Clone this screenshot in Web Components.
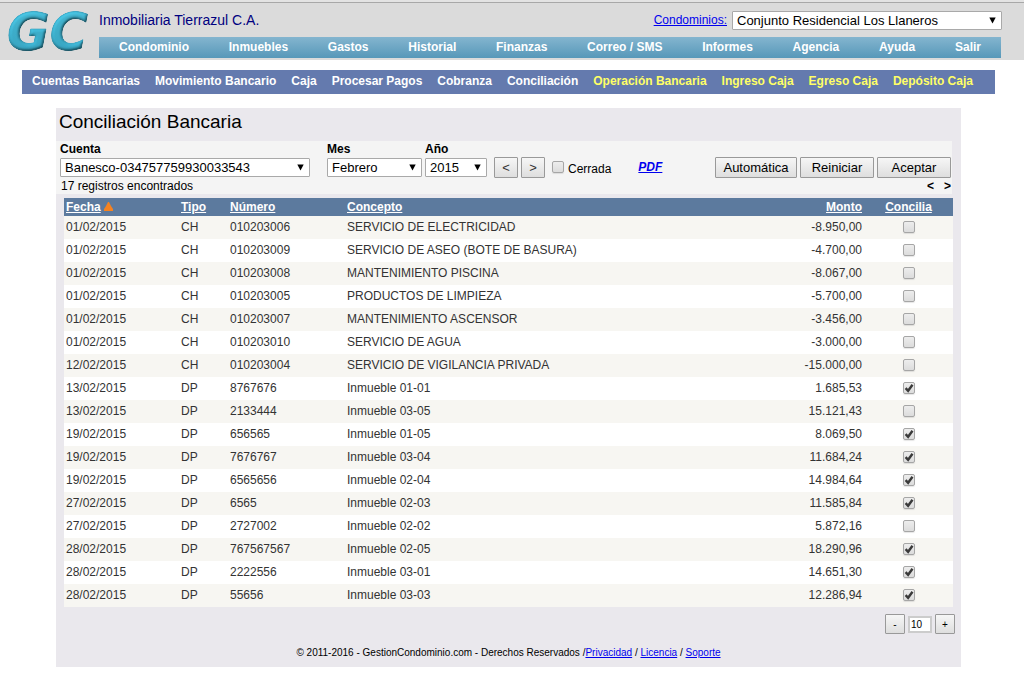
<!DOCTYPE html>
<html lang="es">
<head>
<meta charset="utf-8">
<title>Conciliación Bancaria</title>
<style>
  body {
    margin: 0;
    background: #fff;
    color: #000;
    font-family: "Liberation Sans", Arial, sans-serif;
    font-size: 12px;
    line-height: 16px;
  }
</style>
</head>
<body>

<site-header company="Inmobiliaria Tierrazul C.A.">
  <menu-bar slot="menu" label="Principal">
    <a href="#">Condominio</a>
    <a href="#">Inmuebles</a>
    <a href="#">Gastos</a>
    <a href="#">Historial</a>
    <a href="#">Finanzas</a>
    <a href="#">Correo / SMS</a>
    <a href="#">Informes</a>
    <a href="#">Agencia</a>
    <a href="#">Ayuda</a>
    <a href="#">Salir</a>
  </menu-bar>
</site-header>

<menu-bar kind="sub" label="Finanzas">
  <a href="#">Cuentas Bancarias</a>
  <a href="#">Movimiento Bancario</a>
  <a href="#">Caja</a>
  <a href="#">Procesar Pagos</a>
  <a href="#">Cobranza</a>
  <a href="#">Conciliación</a>
  <a href="#" class="quick">Operación Bancaria</a>
  <a href="#" class="quick">Ingreso Caja</a>
  <a href="#" class="quick">Egreso Caja</a>
  <a href="#" class="quick">Depósito Caja</a>
</menu-bar>

<page-panel>
  <span slot="title">Conciliación Bancaria</span>
  <filter-bar slot="filters"></filter-bar>
  <conciliation-table></conciliation-table>
  <page-size slot="pager" value="10"></page-size>
  <span slot="footer">© 2011-2016 - GestionCondominio.com - Derechos Reservados /<a href="#">Privacidad</a> / <a href="#">Licencia</a> / <a href="#">Soporte</a></span>
</page-panel>

<script>
  // Drop-down with an optional label above it
  class SelectField extends HTMLElement {
    constructor() {
      super();
      this.attachShadow({mode: 'open'});
    }

    connectedCallback() {
      const label = this.getAttribute('label');
      const value = this.getAttribute('value');

      this.shadowRoot.innerHTML = `
        <style>
          :host { display: block; }
          label {
            display: block;
            font-weight: bold;
            line-height: 16px;
            margin-bottom: 1px;
          }
          .box { display: grid; align-items: center; }
          .box > * { grid-area: 1 / 1; }
          select {
            appearance: none;
            box-sizing: border-box;
            width: 100%;
            height: 19px;
            margin: 0;
            padding: 0 20px 0 4px;
            border: 1px solid #a9a9a9;
            border-radius: 1px;
            background: #fff;
            color: #000;
            font: 13px "Liberation Sans", Arial, sans-serif;
          }
          svg {
            justify-self: end;
            margin-right: 6px;
            pointer-events: none;
          }
        </style>
        ${label ? `<label for="select">${label}</label>` : ''}
        <div class="box">
          <select id="select" ${label ? '' : `aria-label="${this.getAttribute('name')}"`}>
            <option>${value}</option>
          </select>
          <svg width="7" height="7" viewBox="0 0 7 7"><path d="M0.3 0.5h6.4L3.5 6.5z"/></svg>
        </div>
      `;
    }
  }

  // Grey gradient checkbox, text passed in the slot
  class CheckField extends HTMLElement {
    constructor() {
      super();
      this.attachShadow({mode: 'open'});
    }

    connectedCallback() {
      const checked = this.hasAttribute('checked') ? 'checked' : '';
      const name = this.getAttribute('name');

      this.shadowRoot.innerHTML = `
        <style>
          :host { display: inline-flex; }
          label { display: flex; align-items: flex-start; gap: 4px; }
          .box { display: grid; }
          .box > * { grid-area: 1 / 1; }
          input {
            appearance: none;
            box-sizing: border-box;
            width: 12px;
            height: 12px;
            margin: 0;
            border: 1px solid #a6a6a6;
            border-radius: 2px;
            background: linear-gradient(#ededed, #dcdcdc);
            box-shadow: 0 1px 1px #0000001a;
          }
          svg { display: none; pointer-events: none; }
          input:checked + svg { display: block; }
        </style>
        <label>
          <span class="box">
            <input type="checkbox" ${checked} ${name ? `aria-label="${name}"` : ''}>
            <svg width="12" height="12" viewBox="0 0 12 12">
              <path d="M2.6 6.2l2.5 2.6 4.4-6" fill="none" stroke="#3a3a3a" stroke-width="2.4"/>
            </svg>
          </span>
          <slot></slot>
        </label>
      `;
    }
  }

  class PushButton extends HTMLElement {
    constructor() {
      super();
      this.attachShadow({mode: 'open'});
      this.shadowRoot.innerHTML = `
        <style>
          :host { display: inline-flex; --size: 13px; }
          :host([small]) { --size: 10px; }
          button {
            box-sizing: border-box;
            min-width: var(--width, 24px);
            height: var(--height, 21px);
            margin: 0;
            padding: 0 2px;
            border: 1px solid #999;
            border-radius: 1px;
            background: linear-gradient(#f6f6f6, #dedede);
            color: var(--ink, #000);
            font: var(--size) "Liberation Sans", Arial, sans-serif;
          }
        </style>
        <button type="button"><slot></slot></button>
      `;
    }
  }

  class MenuBar extends HTMLElement {
    constructor() {
      super();
      this.attachShadow({mode: 'open'});
      this.shadowRoot.innerHTML = `
        <style>
          :host { display: block; }
          nav {
            display: flex;
            box-sizing: border-box;
            height: 21px;
            padding: 0 20px;
            gap: 8px;
            justify-content: space-between;
            line-height: 20px;
            background: linear-gradient(#84b5cf, #5798b9);
          }
          :host([kind="sub"]) nav {
            height: 24px;
            margin: 10px 29px 0 22px;
            padding: 0 22px 0 10px;
            line-height: 22px;
            background: #647aae;
          }
          ::slotted(a) {
            color: #fff;
            font-weight: bold;
            text-decoration: none;
            white-space: nowrap;
          }
          ::slotted(a.quick) { color: #ff6; }
        </style>
        <nav><slot></slot></nav>
      `;
    }

    connectedCallback() {
      this.shadowRoot.querySelector('nav').setAttribute('aria-label', this.getAttribute('label'));
    }
  }

  class SiteHeader extends HTMLElement {
    constructor() {
      super();
      this.attachShadow({mode: 'open'});
    }

    connectedCallback() {
      this.shadowRoot.innerHTML = `
        <style>
          :host { display: block; background: #e3e3e3; padding-top: 2px; }
          header {
            display: flex;
            border-top: 1px solid #a8a8a8;
            padding: 0 23px 2px 8px;
            background: #dbdbdb;
          }
          .logo { flex: none; width: 91px; height: 55px; overflow: visible; }
          .main { flex: 1; min-width: 0; }
          .top {
            display: flex;
            align-items: center;
            height: 34px;
            gap: 5px;
          }
          .company { flex: 1; color: #000080; font-size: 14px; }
          a { color: #0000ee; }
          select-field { width: 270px; margin-right: -1px; }
        </style>
        <header>
          <svg class="logo" viewBox="0 0 91 55" role="img" aria-label="GC">
            <defs>
              <linearGradient id="fill" x1="0" y1="0" x2="0" y2="1">
                <stop offset="0" stop-color="#48bfdb"/>
                <stop offset="1" stop-color="#36a5c3"/>
              </linearGradient>
              <filter id="bevel" x="-10%" y="-10%" width="120%" height="120%">
                <feGaussianBlur in="SourceAlpha" stdDeviation="1.5" result="blur"/>
                <feDiffuseLighting in="blur" surfaceScale="3" lighting-color="#fff" result="light">
                  <feDistantLight azimuth="235" elevation="50"/>
                </feDiffuseLighting>
                <feComposite in="SourceGraphic" in2="light" operator="arithmetic" k1="0.9" k2="0.25" result="lit"/>
                <feComposite in="lit" in2="SourceAlpha" operator="in"/>
              </filter>
            </defs>
            <text x="-1" y="47" font-family="DejaVu Sans, sans-serif" font-size="52"
              font-weight="bold" font-style="italic" fill="url(#fill)"
              stroke="#3aa9c7" stroke-width="1" stroke-linejoin="round" filter="url(#bevel)">GC</text>
          </svg>
          <div class="main">
            <div class="top">
              <span class="company">${this.getAttribute('company')}</span>
              <a href="#">Condominios:</a>
              <select-field name="Condominios" value="Conjunto Residencial Los Llaneros"></select-field>
            </div>
            <slot name="menu"></slot>
          </div>
        </header>
      `;
    }
  }

  class PagePanel extends HTMLElement {
    constructor() {
      super();
      this.attachShadow({mode: 'open'});
      this.shadowRoot.innerHTML = `
        <style>
          :host { display: block; margin: 14px 63px 0 56px; background: #eae8ed; }
          h1 {
            margin: 0;
            padding: 1px 3px 6px;
            font-size: 19px;
            font-weight: normal;
            line-height: 26px;
          }
          main { padding: 4px 8px 7px; }
          footer {
            padding: 10px 0 6px;
            text-align: center;
            font-size: 10px;
            line-height: 17px;
          }
        </style>
        <h1><slot name="title"></slot></h1>
        <slot name="filters"></slot>
        <main><slot></slot></main>
        <slot name="pager"></slot>
        <footer><slot name="footer"></slot></footer>
      `;
    }
  }

  class FilterBar extends HTMLElement {
    constructor() {
      super();
      this.attachShadow({mode: 'open'});
      this.shadowRoot.innerHTML = `
        <style>
          :host {
            display: block;
            margin-right: 9px;
            padding: 0 1px 0 4px;
            background: #f4f4f4;
          }
          .fields, .steps, .actions, .found { display: flex; }
          .fields { align-items: flex-end; height: 37px; }
          .steps, .actions { gap: 3px; }
          .steps { margin-left: 7px; --ink: #333; }
          .account { width: 250px; margin-right: 17px; }
          .month { width: 95px; margin-right: 3px; }
          .year { width: 62px; }
          select-field { margin-bottom: 1px; }
          check-field { margin: 0 0 1px 7px; }
          .pdf {
            margin: 0 auto 3px 27px;
            color: #0000ee;
            font-size: 12px;
            font-weight: bold;
            font-style: italic;
          }
          .found { justify-content: space-between; padding-left: 1px; }
          .pages { display: flex; gap: 10px; font-weight: bold; }
          .pages a { color: #000; text-decoration: none; }
        </style>
        <div class="fields">
          <select-field class="account" label="Cuenta" value="Banesco-034757759930033543"></select-field>
          <select-field class="month" label="Mes" value="Febrero"></select-field>
          <select-field class="year" label="Año" value="2015"></select-field>
          <div class="steps">
            <push-button>&lt;</push-button>
            <push-button>&gt;</push-button>
          </div>
          <check-field>Cerrada</check-field>
          <a class="pdf" href="#">PDF</a>
          <div class="actions">
            <push-button style="--width: 82px">Automática</push-button>
            <push-button style="--width: 74px">Reiniciar</push-button>
            <push-button style="--width: 74px">Aceptar</push-button>
          </div>
        </div>
        <div class="found">
          <span>17 registros encontrados</span>
          <span class="pages"><a href="#">&lt;</a><a href="#">&gt;</a></span>
        </div>
      `;
    }
  }

  // fecha, tipo, número, concepto, monto, conciliado
  const movements = [
    ['01/02/2015', 'CH', '010203006', 'SERVICIO DE ELECTRICIDAD', '-8.950,00', false],
    ['01/02/2015', 'CH', '010203009', 'SERVICIO DE ASEO (BOTE DE BASURA)', '-4.700,00', false],
    ['01/02/2015', 'CH', '010203008', 'MANTENIMIENTO PISCINA', '-8.067,00', false],
    ['01/02/2015', 'CH', '010203005', 'PRODUCTOS DE LIMPIEZA', '-5.700,00', false],
    ['01/02/2015', 'CH', '010203007', 'MANTENIMIENTO ASCENSOR', '-3.456,00', false],
    ['01/02/2015', 'CH', '010203010', 'SERVICIO DE AGUA', '-3.000,00', false],
    ['12/02/2015', 'CH', '010203004', 'SERVICIO DE VIGILANCIA PRIVADA', '-15.000,00', false],
    ['13/02/2015', 'DP', '8767676', 'Inmueble 01-01', '1.685,53', true],
    ['13/02/2015', 'DP', '2133444', 'Inmueble 03-05', '15.121,43', false],
    ['19/02/2015', 'DP', '656565', 'Inmueble 01-05', '8.069,50', true],
    ['19/02/2015', 'DP', '7676767', 'Inmueble 03-04', '11.684,24', true],
    ['19/02/2015', 'DP', '6565656', 'Inmueble 02-04', '14.984,64', true],
    ['27/02/2015', 'DP', '6565', 'Inmueble 02-03', '11.585,84', true],
    ['27/02/2015', 'DP', '2727002', 'Inmueble 02-02', '5.872,16', false],
    ['28/02/2015', 'DP', '767567567', 'Inmueble 02-05', '18.290,96', true],
    ['28/02/2015', 'DP', '2222556', 'Inmueble 03-01', '14.651,30', true],
    ['28/02/2015', 'DP', '55656', 'Inmueble 03-03', '12.286,94', true]
  ];

  class ConciliationTable extends HTMLElement {
    constructor() {
      super();
      this.attachShadow({mode: 'open'});
    }

    connectedCallback() {
      const rows = movements.map(([date, type, number, concept, amount, done]) => `
        <tr>
          <td>${date}</td>
          <td>${type}</td>
          <td>${number}</td>
          <td>${concept}</td>
          <td class="amount">${amount}</td>
          <td class="check"><check-field name="Concilia ${number}" ${done ? 'checked' : ''}></check-field></td>
        </tr>
      `).join('');

      this.shadowRoot.innerHTML = `
        <style>
          :host { display: block; }
          table {
            width: 100%;
            table-layout: fixed;
            border-collapse: collapse;
          }
          th, td { padding: 0 2px; text-align: left; }
          th { height: 18px; background: #5c7a9e; line-height: 18px; }
          th a { color: #fff; }
          td { height: 21px; padding-bottom: 2px; color: #333; }
          tbody tr { background: #fff; }
          tbody tr:nth-child(odd) { background: #f7f6f2; }
          .date { width: 111px; }
          .type { width: 45px; }
          .number { width: 113px; }
          th.amount { width: 120px; }
          th.check { width: 85px; }
          .amount { text-align: right; }
          .check { text-align: center; }
          td check-field { vertical-align: middle; }
        </style>
        <table>
          <thead>
            <tr>
              <th class="date"><a href="#">Fecha</a>
                <svg width="9" height="9" viewBox="0 0 9 9"><path d="M4 0h1l2 4 2 3v2H0V7l2-3z" fill="#f58220"/></svg></th>
              <th class="type"><a href="#">Tipo</a></th>
              <th class="number"><a href="#">Número</a></th>
              <th><a href="#">Concepto</a></th>
              <th class="amount"><a href="#">Monto</a></th>
              <th class="check"><a href="#">Concilia</a></th>
            </tr>
          </thead>
          <tbody>${rows}</tbody>
        </table>
      `;
    }
  }

  // Rows per page: minus, current value, plus
  class PageSize extends HTMLElement {
    constructor() {
      super();
      this.attachShadow({mode: 'open'});
      this.shadowRoot.innerHTML = `
        <style>
          :host {
            display: flex;
            justify-content: flex-end;
            align-items: center;
            gap: 3px;
            margin-right: 6px;
          }
          push-button { --width: 20px; --height: 20px; }
          input {
            box-sizing: border-box;
            width: 24px;
            height: 17px;
            margin: 0;
            padding: 0 1px;
            border: 2px solid #ccc;
            background: #fff;
            font: 10px "Liberation Sans", Arial, sans-serif;
          }
        </style>
        <push-button small>-</push-button>
        <input type="text" aria-label="Registros por página">
        <push-button small>+</push-button>
      `;
    }

    connectedCallback() {
      this.shadowRoot.querySelector('input').value = this.getAttribute('value');
    }
  }

  customElements.define('select-field', SelectField);
  customElements.define('check-field', CheckField);
  customElements.define('push-button', PushButton);
  customElements.define('menu-bar', MenuBar);
  customElements.define('site-header', SiteHeader);
  customElements.define('page-panel', PagePanel);
  customElements.define('filter-bar', FilterBar);
  customElements.define('conciliation-table', ConciliationTable);
  customElements.define('page-size', PageSize);
</script>
</body>
</html>
